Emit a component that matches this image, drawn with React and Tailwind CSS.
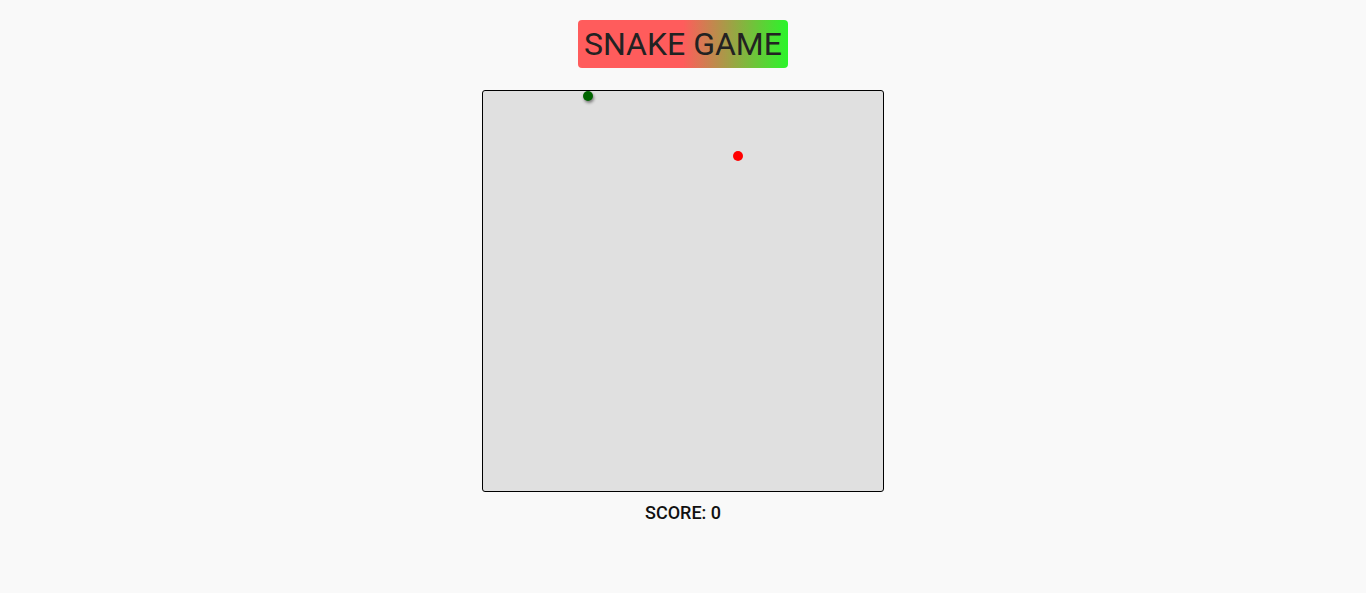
import React from "react";

const SnakeGame = () => {
  const snake = [{ x: 100, y: 0 }];
  const food = { x: 250, y: 60 };

  return (
    <div className="min-h-[593px] w-full bg-[#f9f9f9] flex flex-col items-center pt-5 font-['Roboto',sans-serif]">
      <h1 className="h-12 px-1.5 flex items-center rounded-[4px] text-[32px] leading-none text-[#222] bg-[linear-gradient(90deg,#ff5c5c_50%,#2af52a_100%)]">
        SNAKE GAME
      </h1>

      <div className="relative mt-[22px] w-[402px] h-[402px] border border-black rounded-[3px] bg-[#e0e0e0]">
        {snake.map((s, i) => (
          <div
            key={i}
            className="absolute w-[10px] h-[10px] rounded-full bg-[#006400] shadow-[1px_2px_3px_rgba(0,0,0,0.45)]"
            style={{ left: s.x, top: s.y }}
          />
        ))}
        <div
          className="absolute w-[10px] h-[10px] rounded-full bg-[#ff0000]"
          style={{ left: food.x, top: food.y }}
        />
      </div>

      <p className="mt-[9px] text-[18px] leading-6 font-medium text-[#111]">SCORE: 0</p>
    </div>
  );
};

export default function App() {
  return <SnakeGame />;
}
